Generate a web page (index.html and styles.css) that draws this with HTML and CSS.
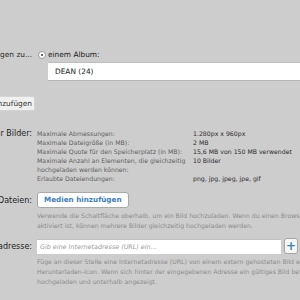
FILE: index.html
```html
<!DOCTYPE html>
<html lang="de">
<head>
    <meta charset="UTF-8">
    <meta name="viewport" content="width=device-width, initial-scale=1.0">
    <title>Bilder hochladen</title>
    <link rel="stylesheet" href="styles.css">
</head>
<body>
    <form class="upload">
        <div class="row row-album">
            <label class="label">Bilder hinzufügen zu...</label>
            <div class="value">
                <div class="choice"><span class="radio"></span> einem Album:</div>
                <div class="album-box">DEAN (24)</div>
            </div>
        </div>

        <div class="row row-add">
            <div class="label"><button type="button" class="btn">Bilder hinzufügen</button></div>
        </div>

        <div class="row row-info">
            <div class="label strong">Beschränkungen für Bilder:</div>
            <div class="value">
                <table class="limits">
                    <tr><td>Maximale Abmessungen:</td><td>1.280px x 960px</td></tr>
                    <tr><td>Maximale Dateigröße (in MB):</td><td>2 MB</td></tr>
                    <tr><td>Maximale Quote für den Speicherplatz (in MB):</td><td>15,6 MB von 150 MB verwendet</td></tr>
                    <tr><td>Maximale Anzahl an Elementen, die gleichzeitig hochgeladen werden können:</td><td>10 Bilder</td></tr>
                    <tr><td>Erlaubte Dateiendungen:</td><td>png, jpg, jpeg, jpe, gif</td></tr>
                </table>
            </div>
        </div>

        <div class="row row-files">
            <div class="label strong">Hochladen von Dateien:</div>
            <div class="value">
                <button type="button" class="btn-media">Medien hinzufügen</button>
                <p class="hint">Verwende die Schaltfläche oberhalb, um ein Bild hochzuladen. Wenn du einen Browser mit dem Flash aktiviert ist, können mehrere Bilder gleichzeitig hochgeladen werden.</p>
            </div>
        </div>

        <div class="row row-url">
            <div class="label strong">Internetadresse:</div>
            <div class="value">
                <div class="url-line">
                    <input type="text" class="url" placeholder="Gib eine Internetadresse (URL) ein...">
                    <button type="button" class="btn-plus">+</button>
                </div>
                <p class="hint">Füge an dieser Stelle eine Internetadresse (URL) von einem extern gehosteten Bild ein und klicke auf das Herunterladen-Icon. Wenn sich hinter der eingegebenen Adresse ein gültiges Bild befindet, wird es hochgeladen und unterhalb angezeigt.</p>
            </div>
        </div>
    </form>
</body>
</html>
```

FILE: styles.css
```css
body {
    margin: 0;
    background-color: #cdcdcd;
    font-family: "DejaVu Sans", Verdana, sans-serif;
    color: #222;
    overflow: hidden;
}
.upload {
    width: 420px;
    margin-left: -90px;
    padding-top: 50px;
}
.row {
    display: grid;
    grid-template-columns: 122px 1fr;
    column-gap: 5px;
}
.label {
    text-align: right;
    font-size: 7.4px;
    line-height: 9px;
    color: #2a2a2a;
}
.label.strong {
    font-size: 8px;
    color: #1e1e1e;
}
.value {
    font-size: 6.2px;
    line-height: 9px;
}
.choice {
    display: flex;
    align-items: center;
    gap: 2px;
    font-size: 7.4px;
    line-height: 9px;
    margin-left: 1px;
}
.radio {
    width: 6px;
    height: 6px;
    border: 1px solid #999;
    border-radius: 50%;
    background: #fff;
    display: inline-flex;
    align-items: center;
    justify-content: center;
}
.radio::after {
    content: "";
    width: 2px;
    height: 2px;
    border-radius: 50%;
    background: #333;
}
.album-box {
    margin: 3px 0 0 11px;
    height: 19px;
    box-sizing: border-box;
    border-top: 1px solid #bdbdbd;
    border-bottom: 1px solid #b5b5b5;
    background: #fff;
    font-size: 7.4px;
    line-height: 17px;
    padding-left: 7px;
    color: #222;
}
.row-add {
    margin-top: 15px;
}
.row-add .label {
    margin-right: -3px;
}
.btn {
    font-family: inherit;
    font-size: 7.4px;
    line-height: 9px;
    color: #333;
    background: #f0f0f0;
    border: 1px solid #d4d4d4;
    border-radius: 2px;
    padding: 2px 2px 2px 4px;
}
.row-info {
    margin-top: 18px;
}
.limits {
    border-collapse: collapse;
    font-size: 6.2px;
    line-height: 9px;
}
.limits td {
    padding: 0;
    vertical-align: top;
    color: #5f5f5f;
}
.limits td:first-child {
    width: 150px;
    padding-right: 6px;
}
.limits td:last-child {
    color: #2b2b2b;
    white-space: nowrap;
}
.row-files {
    margin-top: 9px;
}
.row-files .label {
    padding-top: 4px;
}
.btn-media {
    font-family: inherit;
    font-size: 7.2px;
    font-weight: bold;
    color: #3d80bd;
    background: #fff;
    border: 1px solid #a9a9a9;
    border-radius: 3px;
    padding: 3px 6px;
    line-height: 8px;
}
.hint {
    margin: 3px 0 0;
    font-size: 6.2px;
    line-height: 10px;
    color: #8c8c8c;
    width: 330px;
}
.row-url {
    margin-top: 7px;
}
.row-url .label {
    padding-top: 4px;
}
.url-line {
    display: flex;
    align-items: center;
    gap: 3px;
}
.url {
    width: 244px;
    height: 15px;
    box-sizing: border-box;
    border: none;
    border-top: 1px solid #c2c2c2;
    background: #fff;
    font-family: inherit;
    font-size: 6.4px;
    font-style: italic;
    padding: 0 3px;
    margin: 0;
}
.url::placeholder {
    color: #9a9a9a;
}
.btn-plus {
    width: 14px;
    height: 16px;
    padding: 0;
    border: 1px solid #a5a5a5;
    border-radius: 3px;
    background: #f7f7f7;
    color: #3a7fbf;
    font-family: inherit;
    font-weight: bold;
    font-size: 12px;
    line-height: 13px;
}
```
